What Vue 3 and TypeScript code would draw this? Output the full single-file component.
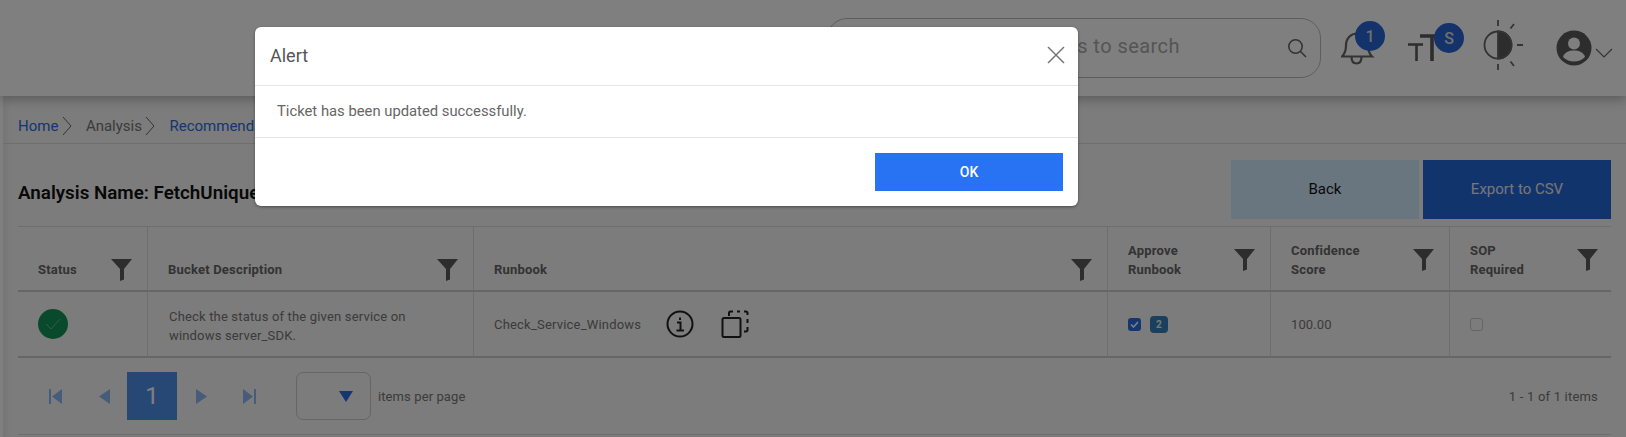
<script setup lang="ts">
const columns = [
  { label: ['Status'] },
  { label: ['Bucket Description'] },
  { label: ['Runbook'] },
  { label: ['Approve', 'Runbook'] },
  { label: ['Confidence', 'Score'] },
  { label: ['SOP', 'Required'] }
]
</script>

<template>
  <div class="page">
    <header class="topbar">
      <div class="search">
        <span class="search-text">Enter keywords to search</span>
        <svg class="search-icon" width="20" height="20" viewBox="0 0 20 20" fill="none" stroke="#666" stroke-width="1.6">
          <circle cx="8.5" cy="8.5" r="6.7" />
          <path d="M13.5 13.5 19 19" />
        </svg>
      </div>
      <div class="tool bell">
        <svg width="34" height="36" viewBox="0 0 34 36" fill="none" stroke="#666" stroke-width="2.2">
          <path d="M1 25.5c3-3 4-6 4-11C5 7 10 2.500 16 2.500S27 7 27 14.500c0 5 1 8 4 11H1Z" />
          <path d="M10.500 26c0 4 2 6.500 5 6.500s5-2.500 5-6.500" />
        </svg>
        <span class="badge">1</span>
      </div>
      <div class="tool font">
        <svg width="38" height="28" viewBox="0 0 38 28" fill="none" stroke="#5a5a5a">
          <path d="M0 10.500H15M8.500 10.500V27" stroke-width="2.6" />
          <path d="M12 2H38M24 2V27" stroke-width="3.6" />
        </svg>
        <span class="badge">S</span>
      </div>
      <svg class="tool contrast" width="42" height="50" viewBox="0 0 42 50" fill="none" stroke="#666" stroke-width="1.8">
        <circle cx="16" cy="25" r="13.500" />
        <path d="M16 11.500a13.500 13.500 0 0 1 0 27Z" fill="#5a5a5a" />
        <path d="M16 0v6M16 44v6M28.500 8.500l3.500-4.500M28.500 41.500l3.500 4.500M35 25h6" />
      </svg>
      <div class="tool user">
        <svg width="36" height="36" viewBox="0 0 36 36">
          <circle cx="18" cy="18" r="17.500" fill="#5a5a5a" />
          <circle cx="18" cy="13.500" r="6" fill="#fff" />
          <path d="M7 27c1.500-5 6-6.500 11-6.500S27.500 22 29 27c-3 3-7 4.500-11 4.500S10 30 7 27Z" fill="#fff" />
        </svg>
        <svg class="chev" width="18" height="10" viewBox="0 0 18 10" fill="none" stroke="#666" stroke-width="1.2">
          <path d="M1 1l8 8 8-8" />
        </svg>
      </div>
    </header>

    <main class="content">
      <nav class="crumbs">
        <a class="link">Home</a>
        <svg width="10" height="20" viewBox="0 0 10 20" fill="none" stroke="#666"><path d="M1 1l8 9-8 9" /></svg>
        <span class="crumb-plain">Analysis</span>
        <svg width="10" height="20" viewBox="0 0 10 20" fill="none" stroke="#666"><path d="M1 1l8 9-8 9" /></svg>
        <a class="link">Recommendation</a>
      </nav>

      <section class="title-row">
        <h1>Analysis Name: FetchUniqueService</h1>
        <div class="actions">
          <button class="btn back">Back</button>
          <button class="btn export">Export to CSV</button>
        </div>
      </section>

      <section class="grid">
        <div v-for="col in columns" :key="col.label.join()" class="cell head">
          <div class="head-inner">
            <span class="head-label"><span v-for="l in col.label" :key="l">{{ l }}</span></span>
            <svg class="funnel" width="21" height="22" viewBox="0 0 21 22">
              <path d="M0 0H21L13 10V20.500L9 22V10Z" fill="#5a5a5a" />
            </svg>
          </div>
        </div>

        <div class="cell">
          <span class="ok">
            <svg width="16" height="12" viewBox="0 0 16 12" fill="none" stroke="#5fc090" stroke-width="1"><path d="M1 6l5 5 9-10" /></svg>
          </span>
        </div>
        <div class="cell desc">Check the status of the given service on windows server_SDK.</div>
        <div class="cell runbook">
          <span>Check_Service_Windows</span>
          <svg class="info" width="28" height="28" viewBox="0 0 28 28" fill="none" stroke="#222" stroke-width="2">
            <circle cx="14" cy="14" r="12.500" />
            <path d="M11 12.500h3.500V20M10.500 20.500h7.500M14 7.500v2.500" />
          </svg>
          <svg class="copy" width="28" height="28" viewBox="0 0 28 28" fill="none" stroke="#222" stroke-width="2">
            <rect x="1.500" y="8" width="18" height="19" rx="1.500" />
            <path d="M8 6V3a1.500 1.500 0 0 1 1.500-1.500H12M16 1.500h3M23 1.500h2a1.500 1.500 0 0 1 1.500 1.500v2M26.500 9v4M26.500 17v3a1.500 1.500 0 0 1-1.500 1.500h-2" />
          </svg>
        </div>
        <div class="cell approve">
          <span class="check on">
            <svg width="9" height="7" viewBox="0 0 9 7" fill="none" stroke="#fff" stroke-width="1.600"><path d="M1 3.500l2.500 2.500L8 1" /></svg>
          </span>
          <span class="count">2</span>
        </div>
        <div class="cell score">100.00</div>
        <div class="cell"><span class="check"></span></div>
      </section>

      <footer class="pager">
        <div class="pages">
          <svg class="first" width="13" height="15" viewBox="0 0 13 15"><path d="M0 0h2v15H0ZM13 0v15L3 7.500Z" /></svg>
          <svg class="prev" width="11" height="15" viewBox="0 0 11 15"><path d="M11 0v15L0 7.500Z" /></svg>
          <span class="current">1</span>
          <svg class="next" width="11" height="15" viewBox="0 0 11 15"><path d="M0 0v15L11 7.500Z" /></svg>
          <svg class="last" width="13" height="15" viewBox="0 0 13 15"><path d="M0 0v15L10 7.500ZM11 0h2v15h-2Z" /></svg>
        </div>
        <div class="size">
          <svg width="14" height="11" viewBox="0 0 14 11"><path d="M0 0H14L7 11Z" fill="#2a6ce0" /></svg>
        </div>
        <span class="per-page">items per page</span>
        <span class="total">1 - 1 of 1 items</span>
      </footer>
    </main>

    <div class="overlay"></div>

    <div class="modal" role="dialog" aria-label="Alert">
      <div class="modal-head">
        <span>Alert</span>
        <svg width="18" height="18" viewBox="0 0 18 18" fill="none" stroke="#777" stroke-width="1.500">
          <path d="M1 1l16 16M17 1 1 17" />
        </svg>
      </div>
      <div class="modal-body">Ticket has been updated successfully.</div>
      <div class="modal-foot"><button class="ok-btn">OK</button></div>
    </div>
  </div>
</template>

<style>
html, body { margin: 0; overflow: hidden; }
</style>

<style scoped>
.page {
  position: relative;
  width: 1626px;
  height: 437px;
  overflow: hidden;
  background: #fff;
  font-family: Roboto, "Liberation Sans", sans-serif;
  color: #666;
}

.topbar {
  position: relative;
  z-index: 1;
  height: 96px;
  box-sizing: border-box;
  display: flex;
  align-items: flex-start;
  background: #fff;
  box-shadow: 0 4px 10px rgba(0, 0, 0, .25);
}
.search {
  margin: 18px 0 0 827px;
  width: 494px;
  height: 60px;
  box-sizing: border-box;
  border: 1px solid #bbb;
  border-radius: 20px;
  display: flex;
  align-items: center;
  justify-content: flex-end;
  padding-right: 13px;
}
.search-text { font-size: 20px; color: #aaa; margin: 0 107px 4px 0; letter-spacing: .45px; }
.tool { position: relative; flex: none; }
.bell { margin: 31px 0 0 20px; }
.font { margin: 34px 0 0 33px; width: 38px; }
.contrast { margin: 20px 0 0 36px; }
.user { margin: 30px 0 0 32px; display: flex; }
.chev { margin: 18px 0 0 3px; }
.badge {
  position: absolute;
  width: 30px;
  height: 30px;
  border-radius: 50%;
  background: #2866d4;
  color: #ddd;
  font-size: 16px;
  font-weight: 500;
  display: flex;
  align-items: center;
  justify-content: center;
}
.bell .badge { left: 14px; top: -10px; }
.font .badge { left: 26px; top: -11px; }

.content {
  margin-left: 3px;
  height: 341px;
  background: #f8f8f8;
  box-shadow: inset 8px 0 8px -6px rgba(0, 0, 0, .08);
}

.crumbs {
  height: 48px;
  box-sizing: border-box;
  border-bottom: 1px solid #ddd;
  padding: 13px 0 0 15px;
  display: flex;
  align-items: center;
  font-size: 15px;
}
.crumbs svg { margin: 0 14px 0 3.5px; }
.link { color: #2a6ce0; }
.crumb-plain { color: #777; }

.title-row {
  height: 82px;
  box-sizing: border-box;
  padding: 16px 15px 7px 15px;
  display: flex;
  justify-content: space-between;
}
.title-row h1 {
  margin: 22px 0 0;
  font-size: 18.8px;
  font-weight: 600;
  line-height: 22px;
  color: #111;
}
.actions { display: flex; gap: 4px; }
.btn {
  width: 188px;
  height: 59px;
  border: 0;
  padding-bottom: 3px;
  font: 15px Roboto, sans-serif;
}
.back { background: #d4ecff; color: #111; }
.export { background: #2468d8; color: #eee; }

.grid {
  width: 1593px;
  margin-left: 15px;
  display: grid;
  grid-template-columns: 129px 326px 634px 163px 179px 162px;
  grid-template-rows: 65px 66px;
  border-top: 1px solid #ddd;
  box-sizing: border-box;
  font-size: 13px;
}
.cell {
  box-sizing: border-box;
  display: flex;
  align-items: center;
  padding: 0 20px;
  border-bottom: 2px solid #ccc;
  border-left: 1px solid #ddd;
  letter-spacing: .1px;
  color: #777;
}
.cell:nth-child(6n + 1) { border-left: 0; }
.head {
  align-items: flex-end;
  padding: 0 15px 11px 20px;
  letter-spacing: .2px;
}
.head:nth-child(6) { padding-right: 13px; }
.head-inner {
  flex: 1;
  display: flex;
  align-items: center;
  justify-content: space-between;
}
.head-label {
  display: flex;
  flex-direction: column;
  font-weight: 700;
  line-height: 19px;
  color: #666;
}
.funnel { margin: -3px 0; }

.ok {
  width: 30px;
  height: 30px;
  border-radius: 50%;
  background: #149458;
  display: flex;
  align-items: center;
  justify-content: center;
}
.desc {
  line-height: 19px;
  padding: 3px 60px 0 21px;
  letter-spacing: .17px;
}
.runbook span { letter-spacing: .2px; }
.info { margin-left: 25px; }
.copy { margin-left: 27px; }
.approve { gap: 9px; }
.check {
  width: 13px;
  height: 13px;
  box-sizing: border-box;
  border: 1px solid #ccc;
  border-radius: 3px;
  display: flex;
  align-items: center;
  justify-content: center;
}
.check.on { background: #2a6ce0; border: 0; }
.count {
  width: 18px;
  height: 17px;
  border-radius: 4px;
  background: #3480bc;
  color: #eee;
  font-size: 10px;
  font-weight: 700;
  display: flex;
  align-items: center;
  justify-content: center;
}

.pager {
  height: 77px;
  box-sizing: border-box;
  margin-left: 15px;
  width: 1593px;
  border-bottom: 1px solid #ddd;
  display: flex;
  align-items: flex-start;
  padding-top: 14px;
  font-size: 13px;
  color: #777;
}
.pages { display: flex; align-items: center; height: 48px; }
.pages svg { fill: #8cb8f0; }
.first { margin-left: 31px; }
.prev { margin-left: 37px; }
.current {
  margin-left: 17px;
  width: 50px;
  height: 48px;
  background: #4f90ea;
  color: #fff;
  font-size: 24px;
  display: flex;
  align-items: center;
  justify-content: center;
}
.next { margin-left: 19px; }
.last { margin-left: 36px; }
.size {
  margin-left: 40px;
  width: 75px;
  height: 48px;
  box-sizing: border-box;
  border: 1px solid #ccc;
  border-radius: 7px;
  display: flex;
  align-items: center;
  justify-content: flex-end;
  padding-right: 17px;
}
.per-page { margin: 17px 0 0 7px; letter-spacing: .1px; }
.total { margin: 17px 13px 0 auto; letter-spacing: .2px; }

.overlay { position: absolute; z-index: 2; inset: 0; background: rgba(0, 0, 0, .5); }

.modal {
  position: absolute;
  z-index: 3;
  left: 255px;
  top: 27px;
  width: 823px;
  height: 179px;
  box-sizing: border-box;
  display: flex;
  flex-direction: column;
  background: #fff;
  border-radius: 6px;
  box-shadow: 0 1px 3px rgba(0, 0, 0, .4);
}
.modal-head {
  height: 59px;
  flex: none;
  box-sizing: border-box;
  border-bottom: 1px solid #e5e5e5;
  padding: 0 13px 2px 15px;
  display: flex;
  align-items: center;
  justify-content: space-between;
  font-size: 18px;
  color: #555;
}
.modal-body {
  height: 52px;
  flex: none;
  box-sizing: border-box;
  border-bottom: 1px solid #e5e5e5;
  padding: 0 0 2px 22px;
  display: flex;
  align-items: center;
  font-size: 14.8px;
  color: #666;
}
.modal-foot { flex: 1; display: flex; justify-content: flex-end; padding: 15px 15px 0 0; }
.ok-btn {
  width: 188px;
  height: 38px;
  border: 0;
  background: #2873f4;
  color: #fff;
  font: 500 14px Roboto, sans-serif;
}
</style>
